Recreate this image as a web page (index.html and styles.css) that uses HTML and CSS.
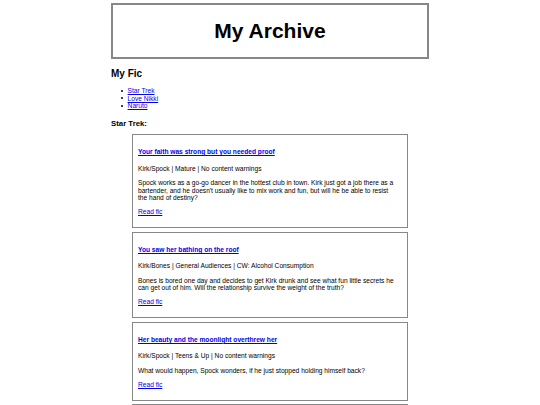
FILE: index.html
```html
<!DOCTYPE html>
<html lang="en">
<head>
<meta charset="utf-8">
<title>My Archive</title>
<link rel="stylesheet" href="styles.css">
</head>
<body>
<div class="page">
  <header class="masthead">
    <h1 class="site-title">My Archive</h1>
  </header>

  <h2 class="section-title">My Fic</h2>
  <ul class="fandoms">
    <li><a href="#startrek">Star Trek</a></li>
    <li><a href="#lovenikki">Love Nikki</a></li>
    <li><a href="#naruto">Naruto</a></li>
  </ul>

  <h3 class="fandom-title" id="startrek">Star Trek:</h3>

  <div class="fic-list">
    <article class="fic">
      <h4 class="fic-title"><a href="#">Your faith was strong but you needed proof</a></h4>
      <p class="fic-meta">Kirk/Spock | Mature | No content warnings</p>
      <p class="fic-summary">Spock works as a go-go dancer in the hottest club in town. Kirk just got a job there as a bartender, and he doesn't usually like to mix work and fun, but will he be able to resist the hand of destiny?</p>
      <p class="fic-link"><a href="#">Read fic</a></p>
    </article>

    <article class="fic">
      <h4 class="fic-title"><a href="#">You saw her bathing on the roof</a></h4>
      <p class="fic-meta">Kirk/Bones | General Audiences | CW: Alcohol Consumption</p>
      <p class="fic-summary">Bones is bored one day and decides to get Kirk drunk and see what fun little secrets he can get out of him. Will the relationship survive the weight of the truth?</p>
      <p class="fic-link"><a href="#">Read fic</a></p>
    </article>

    <article class="fic">
      <h4 class="fic-title"><a href="#">Her beauty and the moonlight overthrew her</a></h4>
      <p class="fic-meta">Kirk/Spock | Teens &amp; Up | No content warnings</p>
      <p class="fic-summary">What would happen, Spock wonders, if he just stopped holding himself back?</p>
      <p class="fic-link"><a href="#">Read fic</a></p>
    </article>

    <article class="fic">
      <h4 class="fic-title"><a href="#">She tied me to a kitchen chair</a></h4>
      <p class="fic-meta">Kirk/Spock | Explicit | No content warnings</p>
      <p class="fic-summary">Uhura has had enough of watching them dance around each other.</p>
      <p class="fic-link"><a href="#">Read fic</a></p>
    </article>
  </div>
</div>
</body>
</html>
```

FILE: styles.css
```css
html, body {
  background: #ffffff;
}

body {
  margin: 3.3px;
  font-family: "Liberation Sans", Arial, sans-serif;
  font-size: 6.64px;
  line-height: 7.6px;
  color: #000000;
}

a {
  color: #0000ee;
}

.page {
  width: 318px;
  margin: 0 auto;
}

.masthead {
  border: 2px solid #888888;
  text-align: center;
}

.site-title {
  margin: 14px 0;
  font-size: 21px;
  line-height: 24px;
  font-weight: bold;
}

.section-title {
  margin: 8.3px 0;
  font-size: 10px;
  line-height: 11.4px;
  font-weight: bold;
}

.fandoms {
  margin: 6.6px 0;
  padding-left: 16.6px;
  list-style: none;
}

.fandoms li {
  line-height: 7.6px;
}

.fandoms li::before {
  content: "";
  display: inline-block;
  width: 2px;
  height: 2px;
  border-radius: 50%;
  background: #000000;
  margin-left: -6.4px;
  margin-right: 4.4px;
  vertical-align: 1.6px;
}

.fandom-title {
  margin: 9px 0 6px;
  font-size: 7.8px;
  line-height: 9px;
  font-weight: bold;
}

.fic-list {
  display: flex;
  flex-direction: column;
  gap: 3.3px;
  margin: 0 21px;
}

.fic {
  border: 1px solid #888888;
  padding: 4.6px 8.6px 4.6px 5px;
}

.fic-title {
  margin: 8.8px 0;
  font-size: 6.64px;
  font-weight: bold;
}

.fic-meta,
.fic-summary,
.fic-link {
  margin: 6.64px 0;
}
```
